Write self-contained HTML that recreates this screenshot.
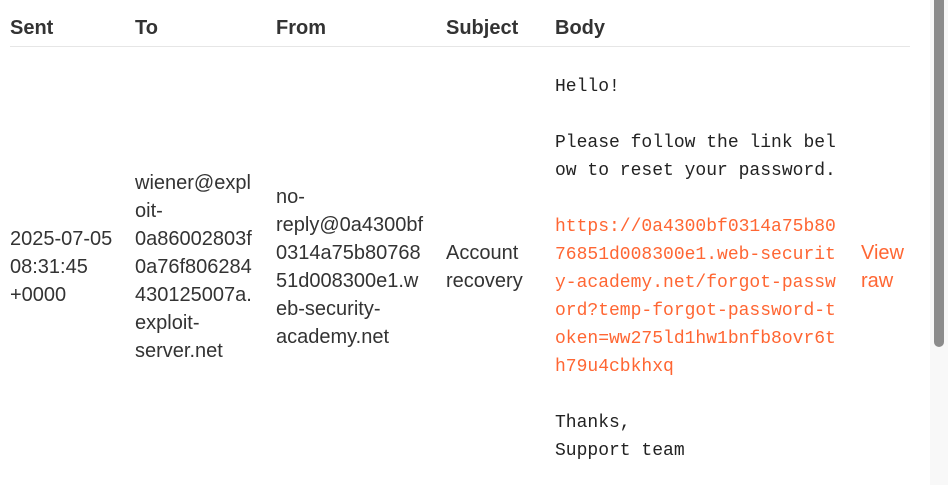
<!DOCTYPE html>
<html><head><style>
body{margin:0;width:948px;height:485px;overflow:hidden;background:#fff;position:relative;font-family:"Liberation Sans",sans-serif;color:#333;}
.h{position:absolute;top:15px;font-weight:bold;font-size:20px;line-height:26px;}
.c{position:absolute;font-size:20px;line-height:28px;white-space:pre;}
.m{position:absolute;left:555px;font-family:"Liberation Mono",monospace;font-size:18px;line-height:28px;white-space:pre;color:#222;}
.o{color:#ff6633;}
</style></head><body>
<div class="h" style="left:10px">Sent</div>
<div class="h" style="left:135px">To</div>
<div class="h" style="left:276px">From</div>
<div class="h" style="left:446px">Subject</div>
<div class="h" style="left:555px">Body</div>
<div style="position:absolute;left:10px;top:46px;width:900px;height:1px;background:#e6e6e6"></div>
<div class="c" style="left:10px;top:225px">2025-07-05
08:31:45
+0000</div>
<div class="c" style="left:135px;top:169px">wiener@expl
oit-
0a86002803f
0a76f806284
430125007a.
exploit-
server.net</div>
<div class="c" style="left:276px;top:183px">no-
reply@0a4300bf
0314a75b80768
51d008300e1.w
eb-security-
academy.net</div>
<div class="c" style="left:446px;top:239px">Account
recovery</div>
<div class="c o" style="left:861px;top:239px">View
raw</div>
<div class="m" style="top:73px">Hello!

Please follow the link bel
ow to reset your password.

<span class="o">https://0a4300bf0314a75b80
76851d008300e1.web-securit
y-academy.net/forgot-passw
ord?temp-forgot-password-t
oken=ww275ld1hw1bnfb8ovr6t
h79u4cbkhxq</span>

Thanks,
Support team</div>
<div style="position:absolute;left:930px;top:0;width:18px;height:485px;background:#f8f8f8"></div>
<div style="position:absolute;left:934px;top:0;width:10px;height:347px;background:#8c8c8c;border-radius:0 0 5px 5px"></div>
</body></html>
